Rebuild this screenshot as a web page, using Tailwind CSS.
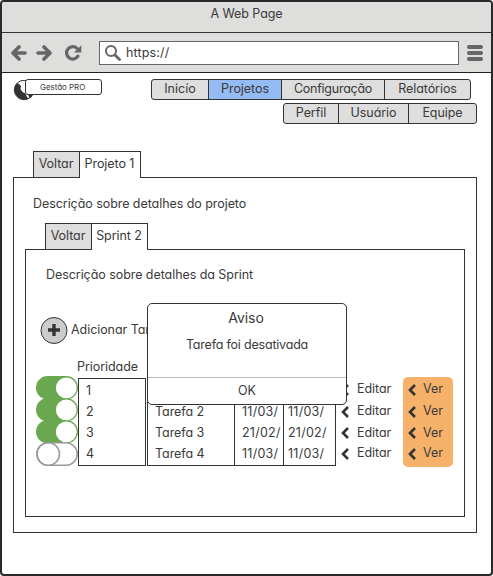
<!DOCTYPE html>
<html lang="pt">
<head>
<meta charset="utf-8">
<title>A Web Page</title>
<script src="https://cdn.jsdelivr.net/npm/@tailwindcss/browser@4"></script>
</head>
<body class="bg-white">
<div class="relative flex h-[576px] w-[493px] flex-col overflow-hidden rounded-[4px] border-2 border-[#2b2829] bg-white font-['Inter','Liberation_Sans',sans-serif] text-[12.5px] leading-[18px] tracking-[-0.06px] whitespace-nowrap text-[#3a3a3a] [font-feature-settings:'cv11']">
  <header class="h-[31px] shrink-0 border-b border-[#333] bg-[#dededd] pt-[3px] text-center"><span>A Web Page</span></header>
  <div class="flex h-10 shrink-0 items-center border-b border-[#222] bg-[#dededd] pl-[9px]">
    <svg class="h-4 w-4" viewBox="0 0 16 16" fill="none" stroke="#666" stroke-width="3.6" stroke-linecap="round" stroke-linejoin="round"><path d="M14 8H2M8 2L2 8l6 6"/></svg>
    <svg class="ml-[9px] h-4 w-4" viewBox="0 0 16 16" fill="none" stroke="#666" stroke-width="3.6" stroke-linecap="round" stroke-linejoin="round"><path d="M2 8h12M8 2l6 6-6 6"/></svg>
    <svg class="ml-[13px] h-4 w-4 overflow-visible" viewBox="0 0 16 16" fill="none"><path d="M13 11.200A6.200 6.200 0 1 1 12.200 3.500" stroke="#666" stroke-width="3.2" stroke-linecap="round"/><path d="M16.300 .3V7.500H9z" fill="#666"/></svg>
    <div class="ml-[18px] flex h-6 w-[360px] items-center border border-[#666] bg-white pl-[5px]">
      <svg class="h-4 w-4" viewBox="0 0 16 16" fill="none" stroke="#666"><circle cx="6" cy="6" r="5" stroke-width="2"/><path d="M10 10l4.5 4.5" stroke-width="2.8" stroke-linecap="round"/></svg>
      <span class="ml-[5px] tracking-[0.15px]">https://</span>
    </div>
    <div class="ml-[8px] flex flex-col gap-[2px]"><i class="h-1 w-4 rounded-full bg-[#666]"></i><i class="h-1 w-4 rounded-full bg-[#666]"></i><i class="h-1 w-4 rounded-full bg-[#666]"></i></div>
  </div>
  <div class="flex h-[78px] shrink-0 pt-[6px]">
    <div class="relative ml-[11px] h-6 w-[90px]">
      <svg class="h-[22px] w-[22px]" viewBox="0 0 22 22"><circle cx="11" cy="11" r="9.700" fill="#fff" stroke="#333" stroke-width="1"/><path d="M4 4Q1 7 1.500 12q1 5 5 7.500l5 1.200 4-1-2-2.700-1-2.500-3-1.500-2-3 .5-3L6 5z" fill="#333"/><path d="M15 15.500h5.200q-1.200 2.500-3.500 4z" fill="#333"/></svg>
      <div class="absolute top-0 left-3 h-4 w-[77px] rounded-[3px] border border-[#333] bg-white pl-[14px] text-[8px] leading-[14px] tracking-[-0.05px]">Gestão PRO</div>
      <svg class="absolute top-[6px] left-[12px] h-[6px] w-[3px]" viewBox="0 0 3 6"><path d="M0 0l1 2-1 3" fill="#333"/></svg>
    </div>
    <nav class="ml-12 flex flex-col gap-[3px]">
      <div class="flex h-[21px] w-[320px] rounded-[3px] border border-[#333] bg-[#dedede] text-center">
        <span class="w-[57px] border-r border-[#333] tracking-[0.05px]">Inicío</span><span class="w-[73px] border-r border-[#333] bg-[#95bbf4]">Projetos</span><span class="w-[103px] border-r border-[#333] tracking-[-0.25px]">Configuração</span><span class="flex-1">Relatórios</span>
      </div>
      <div class="ml-[132px] flex h-[21px] w-[194px] rounded-[3px] border border-[#333] bg-[#dedede] text-center">
        <span class="w-[55px] border-r border-[#333]">Perfil</span><span class="w-[70px] border-r border-[#333]">Usuário</span><span class="flex-1">Equipe</span>
      </div>
    </nav>
  </div>
  <div class="z-10 ml-[31px] flex h-[27px] w-[108px] shrink-0 border border-b-0 border-[#333] text-center leading-[24px]">
    <span class="w-[46px] border-r border-b border-[#333] bg-[#dedede] pr-px">Voltar</span><span class="flex-1 bg-white pr-px">Projeto 1</span>
  </div>
  <main class="-mt-px ml-[11px] flex h-[356px] w-[464px] shrink-0 flex-col border border-[#333]">
    <p class="h-[45px] shrink-0 pt-[17px] pl-[19px]">Descrição sobre detalhes do projeto</p>
    <div class="z-10 ml-[31px] flex h-[27px] w-[103px] shrink-0 border border-b-0 border-[#333] text-center leading-[24px]">
      <span class="w-[46px] border-r border-b border-[#333] bg-[#dedede] pr-px">Voltar</span><span class="flex-1 bg-white pr-px">Sprint 2</span>
    </div>
    <section class="-mt-px ml-[11px] h-[268px] w-[440px] border border-[#333]">
      <p class="h-[67px] pt-4 pl-5">Descrição sobre detalhes da Sprint</p>
      <div class="flex h-[27px] items-center pl-[14px]">
        <svg class="h-7 w-7" viewBox="0 0 28 28"><circle cx="14" cy="13.500" r="13" fill="#ccc" stroke="#333"/><path d="M14 7v12M8 13h12" stroke="#333" stroke-width="3.400"/></svg>
        <span class="-mt-[2px] ml-[3px]">Adicionar Tarefa</span>
      </div>
      <p class="h-[32px] pt-[14px] pl-[51px]">Prioridade</p>
      <div class="flex h-[92px] pl-[10px]">
        <svg class="h-[92px] w-[42px] shrink-0" viewBox="0 0 42 92">
          <g fill="#6aa84f"><rect width="42" height="23.500" rx="11.750"/><rect y="22" width="42" height="23.500" rx="11.750"/><rect y="44" width="42" height="23.500" rx="11.750"/></g>
          <g fill="#fff"><circle cx="30.300" cy="11.900" r="10.400"/><circle cx="30.300" cy="33.900" r="10.400"/><circle cx="30.300" cy="55.900" r="10.400"/></g>
          <g fill="#fff" stroke="#999" stroke-width="1.500"><rect x=".8" y="66.800" width="40.400" height="22.400" rx="11.200"/><circle cx="12.300" cy="78" r="11.200"/></g>
        </svg>
        <div class="mt-[2px] h-[88px] w-[68px] border border-[#333] pt-px pl-[7px] leading-[21px]"><p>1</p><p>2</p><p>3</p><p>4</p></div>
        <div class="mt-[2px] ml-[1px] grid h-[88px] w-[189px] grid-cols-[87px_49px_51px] border border-[#333] leading-[21px]">
          <div class="border-r border-[#333] pt-[22px] pl-[7px]"><p>Tarefa 2</p><p>Tarefa 3</p><p>Tarefa 4</p></div>
          <div class="border-r border-[#333] pt-[22px] pl-[7px] tracking-[0.25px]"><p>11/03/</p><p>21/02/</p><p>11/03/</p></div>
          <div class="pt-[22px] pl-1 tracking-[0.25px]"><p>11/03/</p><p>21/02/</p><p>11/03/</p></div>
        </div>
        <div class="mt-[2px] ml-[5px] flex flex-col">
          <p class="flex h-[22px] items-center"><svg class="mt-px mr-2 h-3 w-2" viewBox="0 0 8 12" fill="none" stroke="#333" stroke-width="2.600"><path d="M7 1L2 6l5 5"/></svg>Editar</p>
          <p class="flex h-[22px] items-center"><svg class="mt-px mr-2 h-3 w-2" viewBox="0 0 8 12" fill="none" stroke="#333" stroke-width="2.600"><path d="M7 1L2 6l5 5"/></svg>Editar</p>
          <p class="flex h-[21px] items-center"><svg class="mt-px mr-2 h-3 w-2" viewBox="0 0 8 12" fill="none" stroke="#333" stroke-width="2.600"><path d="M7 1L2 6l5 5"/></svg>Editar</p>
          <p class="flex h-[20px] items-center"><svg class="mt-px mr-2 h-3 w-2" viewBox="0 0 8 12" fill="none" stroke="#333" stroke-width="2.600"><path d="M7 1L2 6l5 5"/></svg>Editar</p>
        </div>
        <div class="mt-px ml-auto mr-[11px] flex h-[90px] w-[50px] flex-col rounded-[5px] bg-[#f6b26b] pt-px pl-[5px]">
          <p class="flex h-[22px] items-center"><svg class="mt-px mr-[7px] h-3 w-2" viewBox="0 0 8 12" fill="none" stroke="#333" stroke-width="2.600"><path d="M7 1L2 6l5 5"/></svg>Ver</p>
          <p class="flex h-[22px] items-center"><svg class="mt-px mr-[7px] h-3 w-2" viewBox="0 0 8 12" fill="none" stroke="#333" stroke-width="2.600"><path d="M7 1L2 6l5 5"/></svg>Ver</p>
          <p class="flex h-[21px] items-center"><svg class="mt-px mr-[7px] h-3 w-2" viewBox="0 0 8 12" fill="none" stroke="#333" stroke-width="2.600"><path d="M7 1L2 6l5 5"/></svg>Ver</p>
          <p class="flex h-[20px] items-center"><svg class="mt-px mr-[7px] h-3 w-2" viewBox="0 0 8 12" fill="none" stroke="#333" stroke-width="2.600"><path d="M7 1L2 6l5 5"/></svg>Ver</p>
        </div>
      </div>
    </section>
  </main>
  <div role="dialog" class="absolute top-[301px] left-[145px] z-20 flex h-[102px] w-[200px] flex-col rounded-[5px] border border-[#333] bg-white text-center">
    <h2 class="pt-[5px] pr-[2px] text-[14px]">Aviso</h2>
    <p class="mt-[9px] h-[41px] tracking-[-0.2px]">Tarefa foi desativada</p>
    <div class="flex-1 border-t border-[#bbb] pt-[4px]">OK</div>
  </div>
</div>
</body>
</html>
